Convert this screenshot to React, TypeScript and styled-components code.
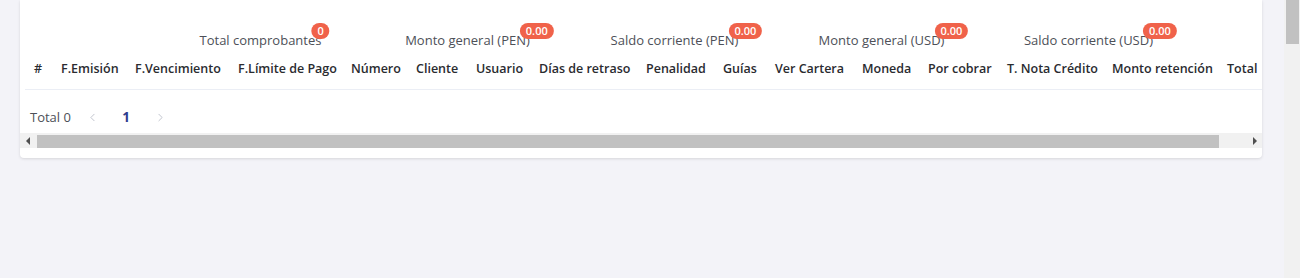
import React from 'react';
import styled, { createGlobalStyle } from 'styled-components';
import { ChevronLeft, ChevronRight } from 'lucide-react';

const GlobalStyle = createGlobalStyle`
  body {
    margin: 0;
    background: #f3f3f8;
    font-family: 'Open Sans', 'Liberation Sans', sans-serif;
  }
`;

const summary = [
  { label: 'Total comprobantes', value: '0' },
  { label: 'Monto general (PEN)', value: '0.00' },
  { label: 'Saldo corriente (PEN)', value: '0.00' },
  { label: 'Monto general (USD)', value: '0.00' },
  { label: 'Saldo corriente (USD)', value: '0.00' },
];

const columns = [
  { title: '#', width: 27 },
  { title: 'F.Emisión', width: 74 },
  { title: 'F.Vencimiento', width: 103 },
  { title: 'F.Límite de Pago', width: 113 },
  { title: 'Número', width: 65 },
  { title: 'Cliente', width: 60 },
  { title: 'Usuario', width: 63 },
  { title: 'Días de retraso', width: 107 },
  { title: 'Penalidad', width: 77 },
  { title: 'Guías', width: 52 },
  { title: 'Ver Cartera', width: 87 },
  { title: 'Moneda', width: 66 },
  { title: 'Por cobrar', width: 79 },
  { title: 'T. Nota Crédito', width: 105 },
  { title: 'Monto retención', width: 115 },
  { title: 'Total', width: 90 },
];

const App = () => {
  return (
    <>
      <GlobalStyle />
      <Page>
        <Main>
          <Card>
            <SummaryRow>
              {summary.map((item) => (
                <SummaryCell key={item.label}>
                  <BadgeWrap>
                    {item.label}
                    <Badge>{item.value}</Badge>
                  </BadgeWrap>
                </SummaryCell>
              ))}
            </SummaryRow>
            <TableArea>
              <HeaderRow>
                {columns.map((col) => (
                  <HeaderCell key={col.title} $width={col.width}>
                    {col.title}
                  </HeaderCell>
                ))}
              </HeaderRow>
            </TableArea>
            <Pagination>
              <TotalLabel>Total 0</TotalLabel>
              <PagerButton $disabled>
                <ChevronLeft size={13} strokeWidth={1.6} />
              </PagerButton>
              <PagerButton $active>1</PagerButton>
              <PagerButton $disabled>
                <ChevronRight size={13} strokeWidth={1.6} />
              </PagerButton>
            </Pagination>
            <HScroll>
              <ArrowButton>
                <ArrowLeft />
              </ArrowButton>
              <HThumb />
              <ArrowButton>
                <ArrowRight />
              </ArrowButton>
            </HScroll>
          </Card>
        </Main>
        <VScroll>
          <VThumb />
        </VScroll>
      </Page>
    </>
  );
};

const Page = styled.div`
  display: flex;
  height: 278px;
  overflow: hidden;
`;

const Main = styled.div`
  flex: 1;
  min-width: 0;
  padding: 0 22px 0 20px;
`;

const VScroll = styled.div`
  flex: 0 0 16px;
  background: #f1f1f1;
`;

const VThumb = styled.div`
  width: 13px;
  height: 44px;
  margin-left: 2px;
  background: #c1c1c1;
`;

const Card = styled.div`
  background: #ffffff;
  border-radius: 0 0 4px 4px;
  box-shadow: 0 1px 3px rgba(0, 0, 0, 0.12);
  padding-bottom: 10px;
  overflow: hidden;
`;

const SummaryRow = styled.div`
  display: flex;
  padding: 31px 0 0 137px;
  height: 18px;
`;

const SummaryCell = styled.div`
  flex: 0 0 207px;
  display: flex;
  justify-content: center;
`;

const BadgeWrap = styled.div`
  position: relative;
  font-size: 13px;
  line-height: 18px;
  color: #4d5058;
  white-space: nowrap;
`;

const Badge = styled.span`
  position: absolute;
  top: 0;
  right: 10px;
  transform: translate(100%, -50%);
  height: 16px;
  line-height: 16px;
  padding: 0 6px;
  border-radius: 8px;
  background: #f0624a;
  color: #ffffff;
  font-size: 11px;
  font-weight: 600;
  white-space: nowrap;
`;

const TableArea = styled.div`
  padding-left: 5px;
  overflow: hidden;
`;

const HeaderRow = styled.div`
  display: flex;
  height: 40px;
  align-items: center;
  border-bottom: 1px solid #ebeef5;
`;

const HeaderCell = styled.div<{ $width: number }>`
  flex: 0 0 ${(p) => p.$width}px;
  padding-left: 9px;
  padding-bottom: 2px;
  box-sizing: border-box;
  font-size: 12.5px;
  font-weight: 600;
  color: #2a2b30;
  white-space: nowrap;
`;

const Pagination = styled.div`
  display: flex;
  align-items: center;
  height: 28px;
  padding: 13px 0 0 10px;
  margin-bottom: 2px;
`;

const TotalLabel = styled.span`
  width: 45px;
  font-size: 13px;
  color: #4d5058;
`;

const PagerButton = styled.span<{ $active?: boolean; $disabled?: boolean }>`
  width: 34px;
  display: flex;
  justify-content: center;
  align-items: center;
  font-size: 13.5px;
  font-weight: 700;
  color: ${(p) => (p.$active ? '#2f3d8e' : p.$disabled ? '#b8bcc6' : '#555861')};
`;

const HScroll = styled.div`
  display: flex;
  align-items: center;
  height: 15px;
  background: #f1f1f1;
`;

const ArrowButton = styled.div`
  flex: 0 0 15px;
  height: 15px;
  display: flex;
  align-items: center;
  justify-content: center;
`;

const ArrowLeft = styled.div`
  width: 0;
  height: 0;
  border-top: 4px solid transparent;
  border-bottom: 4px solid transparent;
  border-right: 4px solid #505050;
`;

const ArrowRight = styled.div`
  width: 0;
  height: 0;
  border-top: 4px solid transparent;
  border-bottom: 4px solid transparent;
  border-left: 4px solid #505050;
`;

const HThumb = styled.div`
  height: 13px;
  margin: 2px 28px 0 2px;
  flex: 1;
  background: #c1c1c1;
`;

export default App;
